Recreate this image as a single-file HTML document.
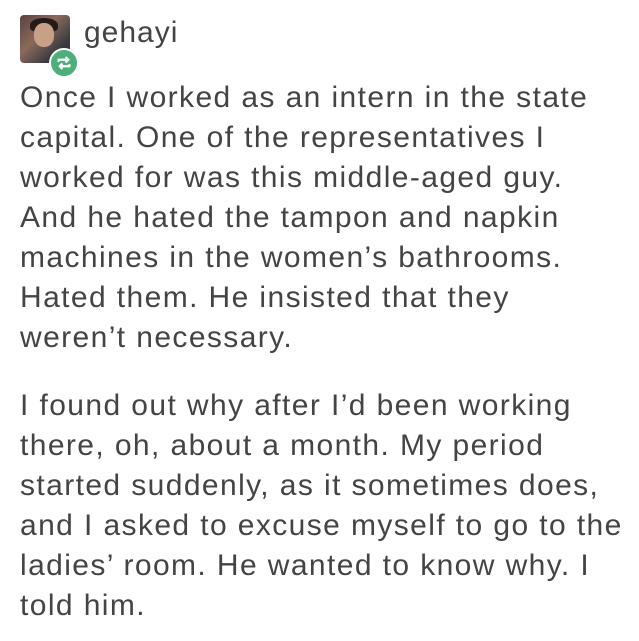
<!DOCTYPE html>
<html><head><style>
body{margin:0;width:639px;height:641px;background:#fff;position:relative;overflow:hidden;font-family:"Liberation Sans",Arial,sans-serif;color:#444;}
.av{position:absolute;left:20px;top:15px;width:50px;height:48px;border-radius:4px;background:linear-gradient(135deg,#5a4040,#8a6a5a 40%,#3a3a40 75%,#2a2c30);}
.face{position:absolute;left:14px;top:8px;width:20px;height:24px;border-radius:45%;background:#c8a088;}
.hair{position:absolute;left:10px;top:3px;width:28px;height:14px;border-radius:50% 50% 30% 30%;background:#241a1a;}
.badge{position:absolute;left:49px;top:48px;width:26px;height:26px;border-radius:50%;background:#4cb07a;border:2px solid #fff;}
.name{position:absolute;left:84px;top:16px;font-size:30px;letter-spacing:1px;color:#444;}
.p{position:absolute;left:20px;font-size:30px;line-height:40px;letter-spacing:1.4px;white-space:nowrap;}
</style></head><body>
<div class="av"><div class="hair"></div><div class="face"></div></div>
<div class="badge"><svg width="26" height="26" viewBox="0 0 24 24"><path d="M7 11v-2h9M13.5 6.5 16 9l-2.5 2.5M17 13v2H8M10.5 17.5 8 15l2.5-2.5" fill="none" stroke="#fff" stroke-width="2"/></svg></div>
<div class="name">gehayi</div>
<div class="p" style="top:78px">Once I worked as an intern in the state<br>capital. One of the representatives I<br>worked for was this middle-aged guy.<br>And he hated the tampon and napkin<br>machines in the women’s bathrooms.<br>Hated them. He insisted that they<br>weren’t necessary.</div>
<div class="p" style="top:386px">I found out why after I’d been working<br>there, oh, about a month. My period<br>started suddenly, as it sometimes does,<br>and I asked to excuse myself to go to the<br>ladies’ room. He wanted to know why. I<br>told him.</div>
</body></html>
